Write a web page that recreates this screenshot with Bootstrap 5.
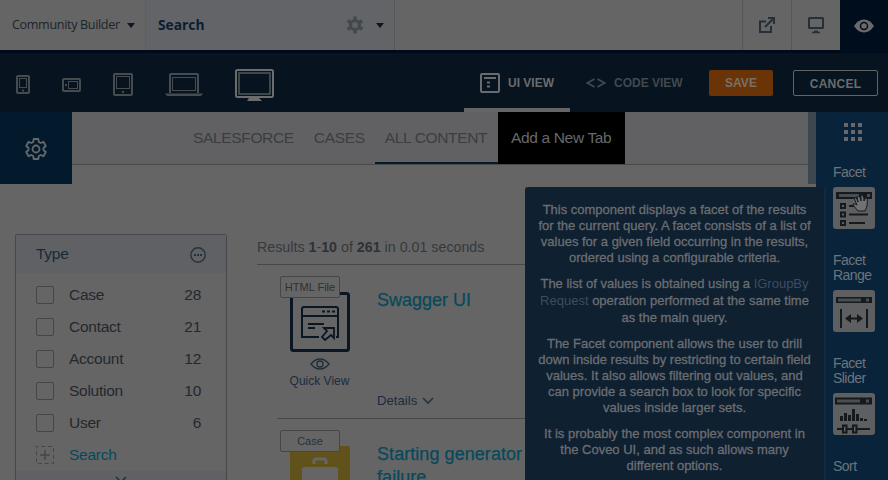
<!DOCTYPE html>
<html lang="en">
<head>
<meta charset="utf-8">
<meta name="viewport" content="width=device-width, initial-scale=1">
<title>Community Builder</title>
<link href="https://cdn.jsdelivr.net/npm/bootstrap@5.3.0/dist/css/bootstrap.min.css" rel="stylesheet">
<style>
body{width:888px;height:480px;overflow:hidden;background:#656565;font-family:"Liberation Sans",Arial,sans-serif;color:#24282d;font-size:15px;line-height:1.2}
svg{display:block;flex:none}
.topbar{height:50px;background:#656565;font-family:"Open Sans","Noto Sans",sans-serif;color:#1c242c;font-size:12.6px}
.app-name{width:146px;padding-left:12px;border-right:1px solid #56606c;white-space:nowrap;letter-spacing:-.35px}
.page-name{width:249px;padding-left:12px;background:#626467;border-right:1px solid #54575b;color:#0b1d31;font-size:13.8px}
.tool{width:49px;border-left:1px solid #55585b;color:#252f39}
.tool-eye{width:48px;height:53px;background:#000d1c;color:#6a6a6a;padding-bottom:2px}
.caret{border:4px solid transparent;border-top:5px solid #0a1624;border-bottom:0}
.strip{height:3px;background:#000a1b}
.devbar{height:59px;background:#07141f;color:#45494d;font-size:12px;font-weight:700}
.view-tab{height:59px;border-bottom:4px solid transparent;padding-top:5px}
.view-tab.current{width:106px;border-color:#656565;color:#696b6d;padding-left:16px}
.code-tab{color:#404850;padding-left:16px;width:139px}
.act{height:26px;border-radius:2px;font-size:12px;font-weight:700;line-height:26px;padding:0;border:0}
.act-save{width:64px;background:#6b3407;color:#777069}
.act-cancel{width:85px;border:1px solid #626568;color:#696b6d;line-height:26px;letter-spacing:.25px}
.gear-box{width:72px;height:72px;background:#021a2b;color:#66696b;padding-top:2px}
.main-area{width:808px;height:368px;overflow:hidden}
.tabs{height:53px;width:736px;background:#616163;border-bottom:1px solid #47494a;color:#3a3d41;padding-left:111px;font-size:15.5px;letter-spacing:-.34px;white-space:nowrap}
.tab-item{height:52px;line-height:52px;padding:0 10px}
.tab-item.current{border-bottom:2px solid #071a2a;width:123px}
.tab-item.add{background:#000;color:#686868;width:127px;padding:0;text-align:center}
.facet-box{width:212px;height:300px;margin:50px 0 0 15px;border:1px solid #46494c;border-radius:2px;background:#656565;font-size:15.5px;letter-spacing:-.26px}
.facet-head{height:38px;background:#606164;color:#182a38;padding:1px 20px 0}
.facet-row{height:32px;padding:0 25px 0 20px}
.tick{width:18px;height:18px;border:1px solid #454646;border-radius:2px;margin-right:15px}
.facet-foot{height:30px;background:#606164;padding-top:5px}
.results{width:560px;margin:36px 0 0 30px}
.summary{height:27px;border-bottom:1px solid #46484a;font-size:14.25px;color:#35393e;line-height:17px;padding-top:1px;margin-top:18px}
.summary b{color:#2d3238}
.result{margin-left:20px;height:154px;border-bottom:1px solid #46484a;padding-top:11px}
.pic{width:86px}
.tag{width:60px;height:22px;border:1px solid #444648;border-radius:2px;background:#656565;font-size:11px;line-height:21px;text-align:center;color:#2c3034;position:relative;z-index:1;margin-left:3px}
.tile{margin:-6px 0 0 13px}
.ttl{font-size:18px;color:#07495c;line-height:23px;-webkit-text-stroke:.25px #07495c;margin-left:14px}
.link-sm{color:#1b2b40}
.scroll-track{width:8px;background:#656565}
.thumb{height:72px;background:#3d474f}
.palette{width:72px;height:368px;background:#08233a;color:#6e747a;font-size:14px;letter-spacing:-.55px;line-height:15px;padding-left:17px;overflow:hidden}
.piece{margin-bottom:24px}
.piece svg{margin-top:7px}
.tip{position:absolute;left:525px;top:187px;width:301px;height:300px;background:#0f2031;border-right:2px solid #122a3f;border-radius:3px;color:#6b6e71;font-size:13px;line-height:16px;text-align:center;padding-top:15px;white-space:nowrap;-webkit-text-stroke:.3px #6b6e71}
.tip p{margin-bottom:10px}
.tip p:first-child{margin-bottom:9px}
.tip a{color:#3c4d61;text-decoration:none;font-size:13px;-webkit-text-stroke:0}
</style>
</head>
<body>
<header class="topbar d-flex">
  <div class="app-name d-flex align-items-center"><span>Community Builder</span><i class="caret ms-auto" style="margin-right:10px"></i></div>
  <div class="page-name d-flex align-items-center"><b>Search</b>
    <svg class="ms-auto" width="18" height="18" viewBox="-9 -9 18 18" fill="none" stroke="#43484d"><circle r="4.6" stroke-width="3"/><g stroke-width="3.5"><path d="M0-5.5V-8.5M0 5.5V8.5M-4.8-2.8-7.4-4.2M4.8 2.8 7.4 4.2M-4.8 2.8-7.4 4.2M4.8-2.8 7.4-4.2"/></g><circle r="2.4" stroke="#54585c" stroke-width="1"/></svg>
    <i class="caret" style="margin:0 10px 0 12px"></i></div>
  <div class="tool ms-auto d-flex align-items-center justify-content-center">
    <svg width="18" height="18" viewBox="0 0 18 18" fill="none" stroke="currentColor" stroke-width="2"><path d="M8 5.500H2V16H13V10M7 11 15 3M10 2H16V8"/></svg></div>
  <div class="tool d-flex align-items-center justify-content-center">
    <svg width="18" height="18" viewBox="0 0 18 18" fill="none" stroke="currentColor" stroke-width="2"><rect x="2" y="2" width="14" height="10" rx=".5"/><path d="M5 16.500H13M7 15.500H11" stroke-width="1.6"/></svg></div>
  <div class="tool-eye d-flex align-items-center justify-content-center">
    <svg width="20" height="14" viewBox="0 0 20 14"><path d="M0 7Q4 .5 10 .5T20 7Q16 13.500 10 13.500T0 7Z" fill="currentColor"/><circle cx="10" cy="7" r="3.500" fill="none" stroke="#000d1c" stroke-width="1.500"/></svg></div>
</header>
<div class="strip"></div>
<nav class="devbar d-flex align-items-center">
  <svg width="274" height="40" viewBox="0 0 274 40" fill="none" stroke="#464b50" stroke-width="2">
    <rect x="17" y="13" width="12" height="17" rx="1"/><rect x="19.500" y="15.500" width="7" height="9" stroke-width="1"/><path d="M22 27.500H24"/>
    <rect x="63" y="16" width="17" height="12" rx="1"/><rect x="68.500" y="18.500" width="9" height="7" stroke-width="1"/><path d="M65 22H67"/>
    <rect x="114" y="11" width="18" height="21" rx="1"/><rect x="116.500" y="13.500" width="13" height="12" stroke-width="1"/><path d="M122 29H124"/>
    <path d="M170 30V12Q170 11 171 11H197Q198 11 198 12V30"/><rect x="172.500" y="14.500" width="23" height="13" stroke-width="1"/><path d="M165 30.500H203L201 33H167Z" fill="#464b50" stroke="none"/>
    <g stroke="#6b6c6d"><rect x="236" y="7" width="37" height="27" rx="1.500"/><rect x="239" y="10" width="31" height="21" stroke="#50575b" stroke-width="1.500"/><path d="M249 35H259L262 38H247Z" fill="#6b6c6d" stroke="none"/></g>
  </svg>
  <div class="view-tab current d-flex align-items-center ms-auto">
    <svg width="20" height="20" viewBox="0 0 20 20" fill="none" stroke="currentColor" stroke-width="2"><rect x="1" y="1" width="18" height="18" rx="1"/><path d="M4 5H16M7 9.500H10M7 13.500H10" /></svg><span class="ms-2">UI VIEW</span></div>
  <div class="view-tab code-tab d-flex align-items-center">
    <svg width="20" height="10" viewBox="0 0 20 10" fill="none" stroke="currentColor" stroke-width="2"><path d="M8.500 1 1.500 5 8.500 9M11.500 1 18.500 5 11.500 9"/></svg><span class="ms-2">CODE VIEW</span></div>
  <button class="btn act act-save">SAVE</button>
  <button class="btn act act-cancel" style="margin:0 10px 0 20px">CANCEL</button>
</nav>
<div class="d-flex">
  <main class="main-area">
    <div class="d-flex" style="height:72px">
      <div class="gear-box d-flex align-items-center justify-content-center">
        <svg width="24" height="24" viewBox="0 0 24 24" fill="none" stroke="currentColor" stroke-width="1.800" stroke-linejoin="round"><path d="M9.700 2H14.300L14.800 5 16.600 6 19.400 4.800 21.800 9 19.500 11V13L21.800 15 19.400 19.200 16.600 18 14.800 19 14.300 22H9.700L9.200 19 7.400 18 4.600 19.200 2.200 15 4.500 13V11L2.200 9 4.600 4.800 7.400 6 9.200 5Z"/><circle cx="12" cy="12" r="3.500"/></svg>
      </div>
      <div class="tabs d-flex"><div class="tab-item">SALESFORCE</div><div class="tab-item">CASES</div><div class="tab-item current">ALL CONTENT</div><div class="tab-item add">Add a New Tab</div></div>
    </div>
    <div class="d-flex align-items-start">
      <section class="facet-box flex-shrink-0">
        <div class="facet-head d-flex align-items-center justify-content-between">Type
          <svg width="16" height="16" viewBox="0 0 16 16" fill="none" stroke="#26323c" stroke-width="1.400"><circle cx="8" cy="8" r="7.200"/><path d="M4 8H6M7 8H9M10 8H12" stroke-width="2"/></svg></div>
        <div class="pt-1" style="margin-top:2px">
          <div class="facet-row d-flex align-items-center"><i class="tick"></i>Case<span class="ms-auto">28</span></div>
          <div class="facet-row d-flex align-items-center"><i class="tick"></i>Contact<span class="ms-auto">21</span></div>
          <div class="facet-row d-flex align-items-center"><i class="tick"></i>Account<span class="ms-auto">12</span></div>
          <div class="facet-row d-flex align-items-center"><i class="tick"></i>Solution<span class="ms-auto">10</span></div>
          <div class="facet-row d-flex align-items-center"><i class="tick"></i>User<span class="ms-auto">6</span></div>
          <div class="facet-row d-flex align-items-center" style="color:#07495c"><svg width="18" height="18" viewBox="0 0 18 18" fill="none" stroke="#454646" style="margin-right:15px"><rect x=".5" y=".5" width="17" height="17" stroke-dasharray="4 2.800" stroke-dashoffset="2"/><path d="M4 9H14M9 4V14" stroke-width="1.500"/></svg>Search</div>
        </div>
        <div class="facet-foot d-flex justify-content-center"><svg width="12" height="8" viewBox="0 0 12 8" fill="none" stroke="#26323c" stroke-width="1.600"><path d="M1 1 6 6 11 1"/></svg></div>
      </section>
      <section class="results flex-shrink-0">
        <div class="summary">Results <b>1</b>-<b>10</b> of <b>261</b> in 0.01 seconds</div>
        <article class="result d-flex">
          <div class="pic flex-shrink-0"><div class="tag">HTML File</div>
            <svg class="tile" width="60" height="60" viewBox="0 0 60 60" fill="none" stroke="#0a1722" stroke-width="2"><rect x="1.500" y="1.500" width="57" height="57" rx="2" stroke-width="3"/><path d="M29 45H12V17Q12 15 14 15H46Q48 15 48 17V45H46M12 24H48"/><path d="M32 19.500H35M37 19.500H40M42 19.500H45M18 32H34M18 36H25"/><path d="M34 36H44V46L41 43 35 48 32 45 37 39Z" stroke-width="1.800"/></svg>
            <div class="text-center link-sm" style="font-size:12px"><svg class="mx-auto" style="margin-top:6px" width="20" height="12" viewBox="0 0 20 12" fill="none" stroke="#222d38" stroke-width="1.300"><path d="M1 6Q5 1 10 1T19 6Q15 11 10 11T1 6Z"/><circle cx="10" cy="6" r="3"/></svg><div style="margin:4px 1px 0 0">Quick View</div></div>
          </div>
          <div><div class="ttl" style="margin-top:13px">Swagger UI</div>
            <div class="link-sm d-flex align-items-center" style="font-size:13.200px;margin:81px 0 0 14px">Details<svg style="margin-left:5px" width="12" height="8" viewBox="0 0 12 8" fill="none" stroke="#26323c" stroke-width="1.600"><path d="M1 1 6 6 11 1"/></svg></div></div>
        </article>
        <article class="result d-flex">
          <div class="pic flex-shrink-0"><div class="tag">Case</div>
            <svg class="tile" width="60" height="60" viewBox="0 0 60 60"><rect width="60" height="60" rx="2" fill="#61521c"/><path d="M24 18V15Q24 13 26 13H34Q36 13 36 15V18" fill="none" stroke="#656565" stroke-width="3"/><rect x="12" y="21" width="36" height="29" rx="2" fill="#656565"/></svg></div>
          <div class="ttl" style="margin-top:13px;letter-spacing:.06px">Starting generator<br>failure</div>
        </article>
      </section>
    </div>
  </main>
  <div class="scroll-track"><div class="thumb"></div></div>
  <aside class="palette">
    <svg width="18" height="18" viewBox="0 0 18 18" style="margin:11px 0 24px 11px" fill="#65696d"><path d="M0 0h4v4H0zM7 0h4v4H7zM14 0h4v4h-4zM0 7h4v4H0zM7 7h4v4H7zM14 7h4v4h-4zM0 14h4v4H0zM7 14h4v4H7zM14 14h4v4h-4z"/></svg>
    <div class="piece">Facet
      <svg width="42" height="42" viewBox="0 0 42 42" fill="none" stroke="#151a1f" stroke-width="2"><rect width="42" height="42" rx="3" fill="#5d5f60" stroke="none"/><path d="M3 8.500H39" stroke-width="7"/><path d="M6 8.500H26M34 8.500H37" stroke="#494e52" stroke-width="3"/><path d="M8 17H12V21H8ZM8 25.500H12V29.500H8ZM8 34H12V38H8ZM16 19H23M16 27.500H35M16 36H32"/><path d="M25 24 20 18Q20 16 22 17L24 18 21 11Q23 9 25 15 23 7 27 10L28 14 28 8Q31 7 31 14L33 10Q35 11 34 19L32 24Z" fill="#727272" stroke="#171b20" stroke-width="1"/></svg></div>
    <div class="piece">Facet<br>Range
      <svg width="42" height="42" viewBox="0 0 42 42" fill="none" stroke="#151a1f" stroke-width="2"><rect width="42" height="42" rx="3" fill="#5d5f60" stroke="none"/><path d="M3 10H39" stroke-width="6"/><path d="M5 10H28M33 10H36" stroke="#494e52" stroke-width="3"/><path d="M8 19V38M34 19V38M14 28.500H28"/><path d="M12 28.500 18 24V33ZM30 28.500 24 24V33Z" fill="#151a1f" stroke="none"/></svg></div>
    <div class="piece">Facet<br>Slider
      <svg width="42" height="42" viewBox="0 0 42 42" fill="none" stroke="#151a1f" stroke-width="2"><rect width="42" height="42" rx="3" fill="#5d5f60" stroke="none"/><path d="M2 8H39" stroke-width="7"/><path d="M4 8H27M33 8H36" stroke="#494e52" stroke-width="3"/><path d="M8.500 28V23M12.500 28V20M16.500 28V22M20.500 28V16M24.500 28V21M28.500 28V25M32.500 28V26" stroke-width="3"/><path d="M4 36H10M13 36H20M23 36H37M10 32.500H13.500V39.500H10ZM20 32.500H23.500V39.500H20Z"/></svg></div>
    <div class="piece">Sort</div>
  </aside>
</div>
<div class="tip">
  <p>This component displays a facet of the results<br>for the current query. A facet consists of a list of<br>values for a given field occurring in the results,<br>ordered using a configurable criteria.</p>
  <p style="line-height:17px">The list of values is obtained using a <a href="#">IGroupBy</a><br><a href="#">Request</a> operation performed at the same time<br>as the main query.</p>
  <p>The Facet component allows the user to drill<br>down inside results by restricting to certain field<br>values. It also allows filtering out values, and<br>can provide a search box to look for specific<br>values inside larger sets.</p>
  <p>It is probably the most complex component in<br>the Coveo UI, and as such allows many<br>different options.</p>
</div>
<script src="https://cdn.jsdelivr.net/npm/bootstrap@5.3.0/dist/js/bootstrap.bundle.min.js"></script>
</body>
</html>
